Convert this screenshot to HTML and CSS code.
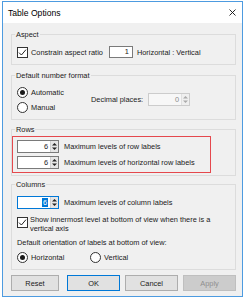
FILE: index.html
```html
<!DOCTYPE html>
<html>
<head>
<meta charset="utf-8">
<link rel="stylesheet" href="styles.css">
</head>
<body>
<div class="win">
  <div class="titlebar">
    <span class="title">Table Options</span>
    <svg class="close" width="7" height="7" viewBox="0 0 7 7"><path d="M0.5 0.5 L6.5 6.5 M6.5 0.5 L0.5 6.5" stroke="#111" stroke-width="0.9" fill="none"/></svg>
  </div>
  <div class="content">
    <fieldset class="group g-aspect">
      <legend>Aspect</legend>
      <div class="gbody row">
        <span class="chk"><svg width="9" height="9" viewBox="0 0 9 9"><polyline points="1,4.6 3.4,7 8,1.6" fill="none" stroke="#222" stroke-width="1"/></svg></span>
        <span class="lbl">Constrain aspect ratio</span>
        <span class="textbox">1</span>
        <span class="lbl hv">Horizontal : Vertical</span>
      </div>
    </fieldset>

    <fieldset class="group g-format">
      <legend>Default number format</legend>
      <div class="gbody format">
        <div class="radios">
          <div class="row"><span class="radio on"></span><span class="lbl">Automatic</span></div>
          <div class="row"><span class="radio"></span><span class="lbl">Manual</span></div>
        </div>
        <span class="lbl">Decimal places:</span>
        <div class="spin disabled dec">
          <span class="val">0</span>
          <span class="btns"><svg width="7" height="11" viewBox="0 0 7 11"><polygon points="3.5,2 6,4.5 1,4.5" fill="#aaa"/><polygon points="1,6.5 6,6.5 3.5,9" fill="#aaa"/></svg></span>
        </div>
      </div>
    </fieldset>

    <fieldset class="group g-rows">
      <legend>Rows</legend>
      <div class="highlight">
        <div class="row">
          <div class="spin">
            <span class="val">6</span>
            <span class="btns"><svg width="7" height="11" viewBox="0 0 7 11"><polygon points="3.5,2 6,4.5 1,4.5" fill="#222"/><polygon points="1,6.5 6,6.5 3.5,9" fill="#222"/></svg></span>
          </div>
          <span class="lbl sp-lbl">Maximum levels of row labels</span>
        </div>
        <div class="row">
          <div class="spin">
            <span class="val">6</span>
            <span class="btns"><svg width="7" height="11" viewBox="0 0 7 11"><polygon points="3.5,2 6,4.5 1,4.5" fill="#222"/><polygon points="1,6.5 6,6.5 3.5,9" fill="#222"/></svg></span>
          </div>
          <span class="lbl sp-lbl">Maximum levels of horizontal row labels</span>
        </div>
      </div>
    </fieldset>

    <fieldset class="group g-cols">
      <legend>Columns</legend>
      <div class="gbody cols">
        <div class="row">
          <div class="spin focus">
            <span class="val"><span class="sel">6</span></span>
            <span class="btns"><svg width="7" height="11" viewBox="0 0 7 11"><polygon points="3.5,2 6,4.5 1,4.5" fill="#222"/><polygon points="1,6.5 6,6.5 3.5,9" fill="#222"/></svg></span>
          </div>
          <span class="lbl sp-lbl">Maximum levels of column labels</span>
        </div>
        <div class="chkrow">
          <span class="chk"><svg width="9" height="9" viewBox="0 0 9 9"><polyline points="1,4.6 3.4,7 8,1.6" fill="none" stroke="#222" stroke-width="1"/></svg></span>
          <span class="lbl multi">Show innermost level at bottom of view when there is a<br>vertical axis</span>
        </div>
        <div class="orient">Default orientation of labels at bottom of view:</div>
        <div class="row radios-h">
          <div class="row r1"><span class="radio on"></span><span class="lbl">Horizontal</span></div>
          <div class="row"><span class="radio"></span><span class="lbl">Vertical</span></div>
        </div>
      </div>
    </fieldset>

    <div class="buttons">
      <span class="btn reset">Reset</span>
      <div class="btngroup">
        <span class="btn default">OK</span>
        <span class="btn">Cancel</span>
        <span class="btn disabled">Apply</span>
      </div>
    </div>
  </div>
</div>
</body>
</html>
```

FILE: styles.css
```css
* { box-sizing: border-box; }
html, body { margin: 0; padding: 0; }
body {
  background: #ffffff;
  width: 247px;
  height: 300px;
  overflow: hidden;
  font-family: "Liberation Sans", Arial, sans-serif;
  font-size: 7.4px;
  color: #1a1a1a;
}
.win {
  margin: 1px 0 0 2px;
  width: 241px;
  border: 1px solid #4d9be0;
  background: #f0f0f0;
  display: flex;
  flex-direction: column;
}
.titlebar {
  height: 21px;
  background: #ffffff;
  display: flex;
  align-items: center;
  justify-content: space-between;
  padding: 0 6px 0 5px;
}
.title { font-size: 8.6px; color: #000; }
.close { display: block; }

.content {
  padding: 6px 6px 5px 8px;
  display: flex;
  flex-direction: column;
}
fieldset.group {
  margin: 0;
  padding: 0;
  border: 1px solid #dcdcdc;
  min-width: 0;
}
legend {
  padding: 0 1px;
  margin-left: 3px;
  line-height: 11px;
  font-size: 7.4px;
  color: #1a1a1a;
}
.g-format { margin-top: 5px !important; }
.g-rows { margin-top: 4px !important; }
.g-cols { margin-top: 3px !important; }

.row { display: flex; align-items: center; }
.gbody { padding-left: 5px; }
.lbl { white-space: nowrap; line-height: 9px; }

.chk {
  width: 11px;
  height: 11px;
  border: 1px solid #333;
  background: #fff;
  display: flex;
  flex-shrink: 0;
}
.chk svg { display: block; }
.chk + .lbl { margin-left: 3px; }

.radio {
  width: 11px;
  height: 11px;
  border: 1px solid #333;
  border-radius: 50%;
  background: #fff;
  display: flex;
  align-items: center;
  justify-content: center;
  flex-shrink: 0;
}
.radio.on::after {
  content: "";
  width: 5px;
  height: 5px;
  border-radius: 50%;
  background: #1a1a1a;
}
.radio + .lbl { margin-left: 3px; }

/* Aspect */
.g-aspect .gbody { padding-top: 6px; padding-bottom: 6px; }
.textbox {
  width: 24px;
  height: 12px;
  border: 1px solid #7a7a7a;
  background: #fff;
  text-align: right;
  padding-right: 3px;
  line-height: 10px;
  margin-left: 6px;
}
.hv { margin-left: 4px; }

/* Number format */
.format {
  display: flex;
  align-items: center;
  padding-top: 5px;
  padding-bottom: 6px;
}
.radios {
  width: 74px;
  display: flex;
  flex-direction: column;
  gap: 3px;
}
.radios .row { height: 12px; }
.dec { margin-left: 5px; width: 43px; }

/* Spinner */
.spin {
  display: flex;
  width: 42px;
  height: 13px;
  border: 1px solid #7a7a7a;
  background: #fff;
  flex-shrink: 0;
}
.spin .val {
  flex: 1;
  text-align: right;
  padding-right: 2px;
  line-height: 11px;
}
.spin .btns {
  width: 8px;
  background: #e6e6e6;
  border-left: 1px solid #d0d0d0;
  display: flex;
  justify-content: center;
}
.spin .btns svg { display: block; }
.spin.disabled { border-color: #cccccc; background: #f7f7f7; color: #8c8c8c; }
.spin.disabled .btns { background: #efefef; border-left-color: #e0e0e0; }
.spin.focus { border-color: #0078d7; }
.sel { background: #0078d7; color: #fff; padding: 0 1px; }
.sp-lbl { margin-left: 5px; }

/* Rows */
.highlight {
  margin: 1px 0 2px 0;
  width: 199px;
  border: 1px solid #e5484d;
  padding: 3px 0 3px 4px;
  display: flex;
  flex-direction: column;
  gap: 3px;
}

/* Columns */
.cols { padding-top: 6px; padding-bottom: 6px; }
.chkrow { display: flex; align-items: flex-start; margin-top: 6px; }
.chkrow .chk { margin-top: 2px; }
.chkrow .multi { margin-left: 2px; }
.orient { margin-top: 5px; line-height: 9px; white-space: nowrap; }
.radios-h { margin-top: 4px; height: 12px; }
.radios-h .r1 { width: 73px; }

/* Buttons */
.buttons {
  margin-top: 5px;
  display: flex;
  justify-content: space-between;
}
.btngroup { display: flex; gap: 5px; }
.btn {
  width: 53px;
  height: 16px;
  border: 1px solid #adadad;
  background: #e1e1e1;
  display: flex;
  align-items: center;
  justify-content: center;
  color: #1a1a1a;
}
.btn.reset { width: 48px; }
.btn.default { border-color: #0078d7; }
.btn.disabled { background: #cccccc; border-color: #bfbfbf; color: #8f8f8f; }
```
